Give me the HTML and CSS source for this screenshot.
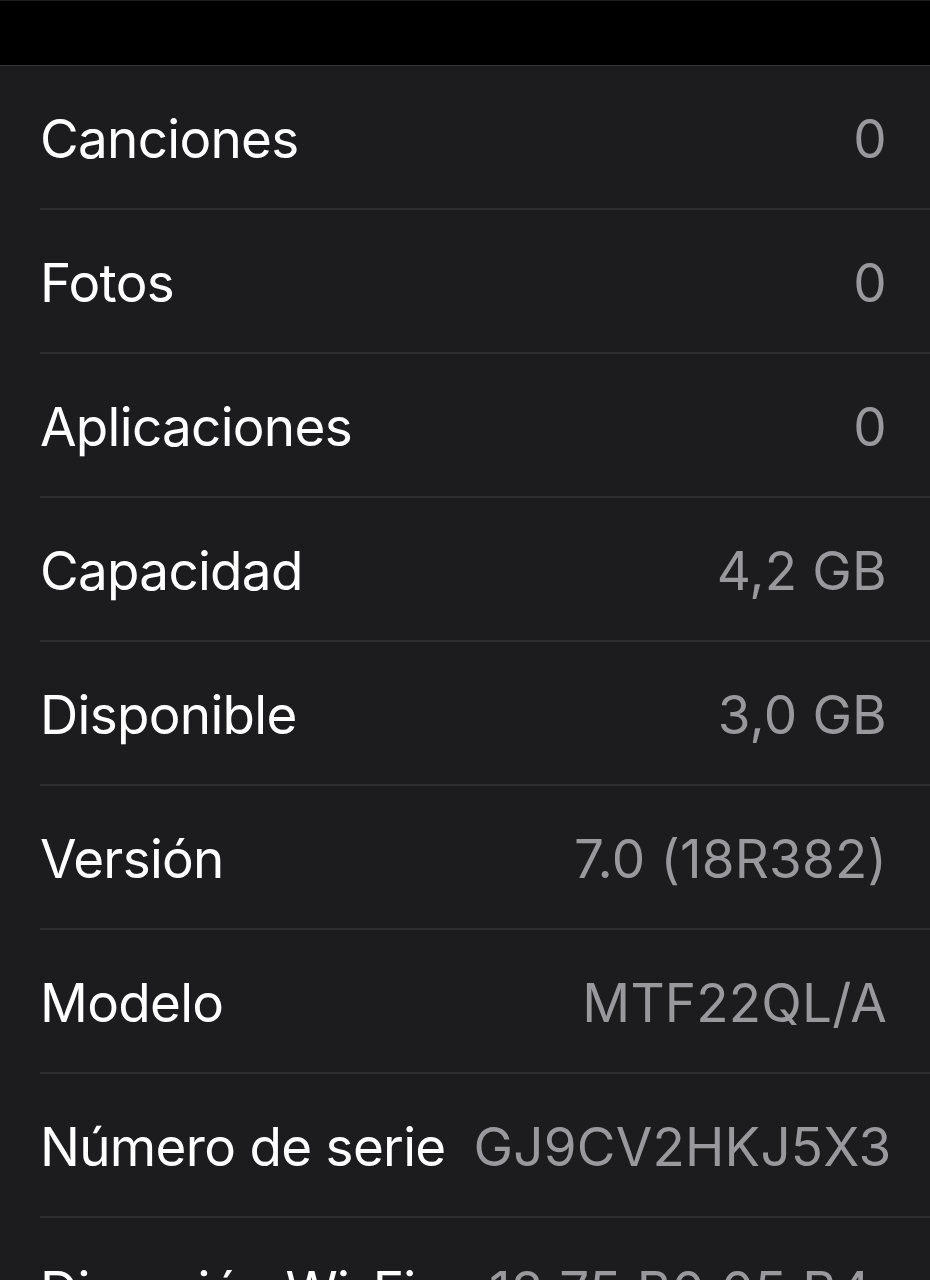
FILE: index.html
```html
<!DOCTYPE html>
<html lang="es">
<head>
    <meta charset="UTF-8">
    <meta name="viewport" content="width=device-width, initial-scale=1.0">
    <title>Información</title>
    <link rel="stylesheet" href="styles.css">
</head>
<body>
    <div class="top-bar"></div>
    <div class="list">
        <div class="row"><span class="label">Canciones</span><span class="value">0</span></div>
        <div class="row"><span class="label">Fotos</span><span class="value">0</span></div>
        <div class="row"><span class="label">Aplicaciones</span><span class="value">0</span></div>
        <div class="row"><span class="label">Capacidad</span><span class="value">4,2 GB</span></div>
        <div class="row"><span class="label">Disponible</span><span class="value">3,0 GB</span></div>
        <div class="row"><span class="label">Versión</span><span class="value">7.0 (18R382)</span></div>
        <div class="row"><span class="label">Modelo</span><span class="value">MTF22QL/A</span></div>
        <div class="row"><span class="label">Número de serie</span><span class="value">GJ9CV2HKJ5X3</span></div>
        <div class="row"><span class="label">Dirección Wi-Fi</span><span class="value">18:75:B0:05:B4:<wbr>2E</span></div>
    </div>
</body>
</html>
```

FILE: styles.css
```css
body {
    margin: 0;
    padding: 0;
    background-color: #1c1c1e;
    font-family: Inter, 'Noto Sans', sans-serif;
    height: 1280px;
    overflow: hidden;
}
.top-bar {
    height: 66px;
    box-sizing: border-box;
    background-color: #000;
    border-top: 1px solid #1e1e20;
    border-bottom: 1px solid #38383a;
}
.list {
    padding-left: 40px;
}
.row {
    display: flex;
    justify-content: space-between;
    align-items: flex-start;
    gap: 28px;
    box-sizing: border-box;
    height: 144px;
    padding: 43px 43px 0 0;
    border-bottom: 2px solid #2e2e30;
}
.label {
    color: #fff;
    font-size: 53px;
    line-height: 60px;
    white-space: nowrap;
    letter-spacing: -0.7px;
}
.value {
    color: #98989d;
    font-size: 53px;
    line-height: 60px;
    text-align: right;
    letter-spacing: 0.2px;
}
```
